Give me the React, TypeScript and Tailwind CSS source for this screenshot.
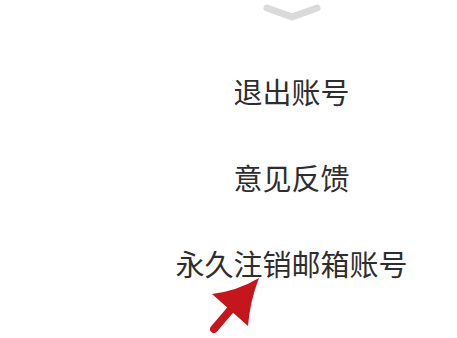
import React from "react";

const items = ["退出账号", "意见反馈", "永久注销邮箱账号"];

function ChevronHandle() {
  return (
    <svg width="60" height="22" viewBox="0 0 60 22" fill="none">
      <path
        d="M5 7 L30 16 L55 7"
        stroke="#dadada"
        strokeWidth="7"
        strokeLinecap="round"
        strokeLinejoin="round"
      />
    </svg>
  );
}

function RedArrow() {
  return (
    <svg
      className="absolute left-0 top-0 pointer-events-none"
      width="457"
      height="338"
      viewBox="0 0 457 338"
    >
      <line x1="214" y1="329" x2="232" y2="308" stroke="#c4161c" strokeWidth="8" strokeLinecap="round" />
      <path
        d="M259 278 Q 237 291 212 294 L 230 310 L 248 326 Q 250 301 259 278 Z"
        fill="#c4161c"
      />
    </svg>
  );
}

export default function App() {
  return (
    <div className="relative w-[457px] h-[338px] bg-white overflow-hidden" style={{ fontFamily: '"Noto Sans CJK SC", "Noto Sans", sans-serif' }}>
      <div className="flex flex-col items-center pl-[126px]">
        <div className="pt-[1px]">
          <ChevronHandle />
        </div>
        <div className="flex flex-col items-center gap-[57px] mt-[54px]">
          {items.map((label) => (
            <div key={label} className="text-[29px] leading-[29px] text-[#2e2e2e] whitespace-nowrap">
              {label}
            </div>
          ))}
        </div>
      </div>
      <RedArrow />
    </div>
  );
}
